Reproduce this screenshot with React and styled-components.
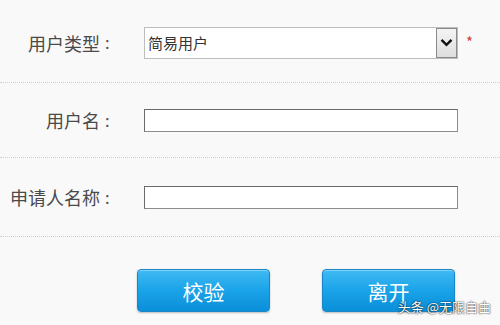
import React from 'react'
import styled, { createGlobalStyle } from 'styled-components'

const FONT = '"Noto Sans CJK SC", "Noto Sans", sans-serif'

const Global = createGlobalStyle`
  html, body {
    margin: 0;
    padding: 0;
    background: #f9f9f9;
    font-family: ${FONT};
  }
`

const Page = styled.div({
  position: 'relative',
  width: 500,
  height: 325,
  overflow: 'hidden',
  background: '#f9f9f9',
})

const Row = styled.div(({ $h, $pt }) => ({
  display: 'flex',
  alignItems: 'center',
  height: $h,
  paddingTop: $pt || 0,
  boxSizing: 'border-box',
  borderBottom: '1px dotted #cfcfcf',
}))

const Label = styled.div({
  flexShrink: 0,
  width: 111,
  display: 'flex',
  justifyContent: 'flex-end',
  alignItems: 'center',
  fontSize: 18,
  color: '#4a4a4a',
  whiteSpace: 'nowrap',
  marginRight: 33,
})

const Colon = styled.span({
  marginLeft: 5,
  fontFamily: '"Noto Sans", sans-serif',
  fontSize: 17,
  width: 6,
})

const SelectBox = styled.div({
  flexShrink: 0,
  position: 'relative',
  width: 314,
  height: 32,
  boxSizing: 'border-box',
  border: '1px solid #bdbdbd',
  background: '#fff',
  display: 'flex',
  alignItems: 'center',
  paddingLeft: 3,
  fontSize: 15,
  color: '#333',
})

const DropButton = styled.div({
  position: 'absolute',
  right: 0,
  top: 0,
  width: 21,
  height: 30,
  boxSizing: 'border-box',
  border: '1px solid #8a8a8a',
  background: 'linear-gradient(#f4f4f4, #dedede)',
  display: 'flex',
  alignItems: 'center',
  justifyContent: 'center',
})

const Star = styled.span({
  flexShrink: 0,
  color: '#d04040',
  fontSize: 15,
  marginLeft: 8,
  marginTop: -2,
})

const TextInput = styled.input({
  flexShrink: 0,
  width: 314,
  height: 23,
  boxSizing: 'border-box',
  border: '1px solid #8c8c8c',
  borderTopColor: '#6a6a6a',
  borderLeftColor: '#6a6a6a',
  background: '#fff',
  padding: 0,
  margin: 0,
  outline: 'none',
})

const Actions = styled.div({
  display: 'flex',
  paddingTop: 32,
  paddingLeft: 137,
  gap: 52,
})

const Button = styled.button({
  width: 133,
  height: 43,
  border: '1px solid #1a86c8',
  borderRadius: 4,
  background: 'linear-gradient(#3fbaf3, #1aa3e8 50%, #0a8fd9)',
  boxShadow: '0 1px 2px rgba(0,0,0,0.25), inset 0 1px 0 rgba(255,255,255,0.35)',
  color: '#fff',
  fontFamily: FONT,
  fontSize: 21,
  padding: 0,
  cursor: 'pointer',
})

const Watermark = styled.div({
  position: 'absolute',
  right: 9,
  bottom: 9,
  fontSize: 13,
  color: '#fff',
  textShadow: '0 0 2px rgba(0,0,0,0.7), 0 0 1px rgba(0,0,0,0.8)',
})

export default function App() {
  return (
    <Page>
      <Global />
      <Row $h={83} $pt={3}>
        <Label>
          用户类型<Colon>:</Colon>
        </Label>
        <SelectBox>
          简易用户
          <DropButton>
            <svg width="13" height="9" viewBox="0 0 13 9">
              <path d="M1.5 1.8 L6.5 6.8 L11.5 1.8" fill="none" stroke="#111" strokeWidth="2.4" />
            </svg>
          </DropButton>
        </SelectBox>
        <Star>*</Star>
      </Row>
      <Row $h={75}>
        <Label>
          用户名<Colon>:</Colon>
        </Label>
        <TextInput />
      </Row>
      <Row $h={79}>
        <Label>
          申请人名称<Colon>:</Colon>
        </Label>
        <TextInput />
      </Row>
      <Actions>
        <Button>校验</Button>
        <Button>离开</Button>
      </Actions>
      <Watermark>头条 @无限自由</Watermark>
    </Page>
  )
}
